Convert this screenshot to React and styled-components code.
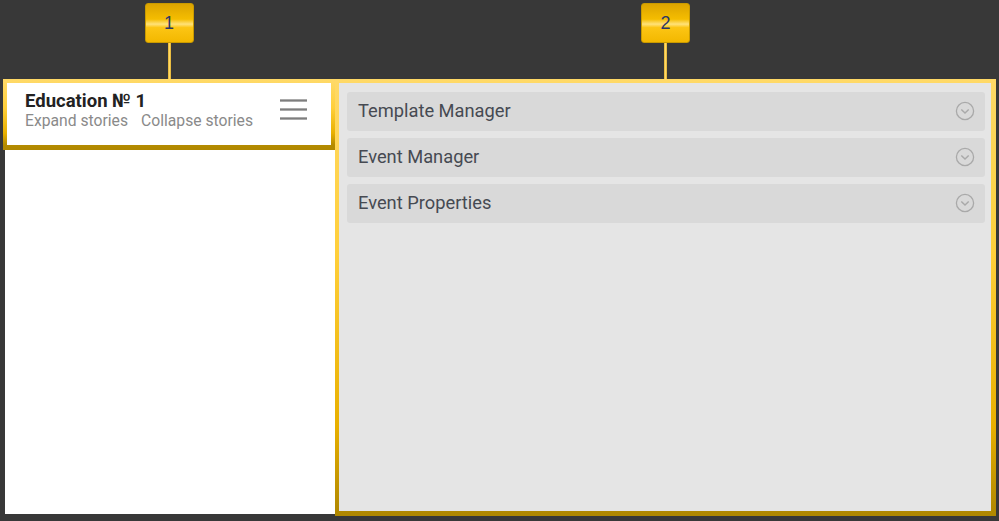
import React from "react";
import styled, { createGlobalStyle } from "styled-components";

const Global = createGlobalStyle`
  html, body { margin: 0; padding: 0; background: #383838; }
  body { font-family: Roboto, "Noto Sans", sans-serif; }
  *, *::before, *::after { box-sizing: border-box; }
`;

const Page = styled.div`
  display: flex;
  align-items: flex-start;
  padding: 3px 0 0 3px;
  height: 521px;
`;

const Column = styled.div`
  display: flex;
  flex-direction: column;
  align-items: center;
  width: ${(p) => p.$width}px;
`;

const Callout = styled.div`
  width: 49px;
  height: 40px;
  border-radius: 3px;
  border: 1px solid #c99a00;
  background: linear-gradient(
    to bottom,
    #dca400 0%,
    #f5bd00 40%,
    #ffe27a 53%,
    #fcc514 62%,
    #f3b800 100%
  );
  display: flex;
  align-items: center;
  justify-content: center;
  font-family: "Liberation Sans", Arial, sans-serif;
  font-size: 18px;
  color: #2c3766;
`;

const Stem = styled.div`
  width: 3px;
  height: 36px;
  background: linear-gradient(to right, #e0b030, #ffd966, #e0b030);
`;

const goldBorder = `
  border-style: solid;
  border-image: linear-gradient(to bottom, #ffd966 0%, #ffcf3a 40%, #e8b000 80%, #b08800 100%) 1;
`;

const LeftPanel = styled.div`
  align-self: stretch;
  display: flex;
  flex-direction: column;
`;

const Header = styled.div`
  ${goldBorder}
  border-width: 4px 4px 5px 4px;
  background: #fff;
  height: 71px;
  display: flex;
  align-items: flex-start;
  justify-content: space-between;
  padding: 8px 24px 0 18px;
`;

const TitleBlock = styled.div`
  display: flex;
  flex-direction: column;
`;

const Title = styled.div`
  font-size: 18.5px;
  line-height: 21px;
  font-weight: 700;
  color: #222;
`;

const Links = styled.div`
  display: flex;
  gap: 13px;
  font-size: 15.7px;
  line-height: 17px;
  color: #8a8a8a;
`;

const Link = styled.span`
  cursor: pointer;
`;

const Burger = styled.div`
  display: flex;
  flex-direction: column;
  gap: 6px;
  margin-top: 8px;
  width: 27px;
`;

const BurgerLine = styled.span`
  display: block;
  height: 3px;
  background: #7e7e7e;
  border-top: 1px solid #aaa;
  border-bottom: 1px solid #aaa;
`;

const LeftBody = styled.div`
  background: #fff;
  height: 364px;
  margin-left: 2px;
`;

const RightPanel = styled.div`
  align-self: stretch;
  ${goldBorder}
  border-width: 4px 5px 5px 4px;
  background: #e5e5e5;
  height: 437px;
  padding: 9px 6px 0 8px;
  display: flex;
  flex-direction: column;
  gap: 7px;
`;

const Row = styled.div`
  height: 39px;
  border-radius: 3px;
  background: #d9d9d9;
  display: flex;
  align-items: center;
  justify-content: space-between;
  padding: 0 10px 2px 11px;
  font-size: 18.3px;
  color: #464a52;
`;

const Chevron = () => (
  <svg width="20" height="20" viewBox="0 0 20 20">
    <circle cx="10" cy="10" r="8.6" fill="none" stroke="#a9a9a9" strokeWidth="1.3" />
    <path d="M6.3 8.4 L10 12.1 L13.7 8.4" fill="none" stroke="#a9a9a9" strokeWidth="1.4" />
  </svg>
);

const sections = ["Template Manager", "Event Manager", "Event Properties"];

export default function App() {
  return (
    <>
      <Global />
      <Page>
        <Column $width={332}>
          <Callout>1</Callout>
          <Stem />
          <LeftPanel>
            <Header>
              <TitleBlock>
                <Title>Education № 1</Title>
                <Links>
                  <Link>Expand stories</Link>
                  <Link>Collapse stories</Link>
                </Links>
              </TitleBlock>
              <Burger>
                <BurgerLine />
                <BurgerLine />
                <BurgerLine />
              </Burger>
            </Header>
            <LeftBody />
          </LeftPanel>
        </Column>
        <Column $width={661}>
          <Callout>2</Callout>
          <Stem />
          <RightPanel>
            {sections.map((s) => (
              <Row key={s}>
                <span>{s}</span>
                <Chevron />
              </Row>
            ))}
          </RightPanel>
        </Column>
      </Page>
    </>
  );
}
